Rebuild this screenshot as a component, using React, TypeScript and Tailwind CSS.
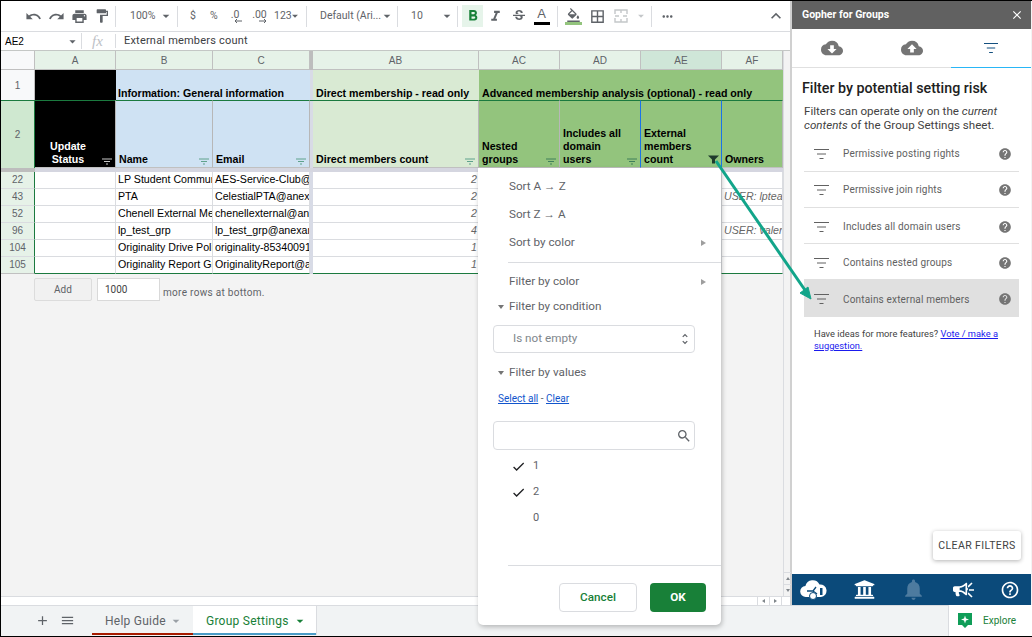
import {
  MdUndo, MdRedo, MdPrint, MdFormatPaint, MdArrowDropDown, MdFormatBold, MdFormatItalic, MdStrikethroughS,
  MdFormatColorFill, MdBorderAll, MdMoreHoriz, MdExpandLess, MdCloudDownload, MdCloudUpload,
  MdClose, MdHelp, MdHelpOutline, MdNotifications, MdCheck, MdSearch, MdAdd, MdMenu, MdUnfoldMore,
} from "react-icons/md";
import { FaUniversity, FaBullhorn } from "react-icons/fa";

const rows = [
  { n: "22", name: "LP Student Community", email: "AES-Service-Club@anexample.org", count: "2", owner: "" },
  { n: "43", name: "PTA", email: "CelestialPTA@anexample.org", count: "2", owner: "USER: lpteam@anexample.org" },
  { n: "52", name: "Chenell External Members", email: "chenellexternal@anexample.org", count: "2", owner: "" },
  { n: "96", name: "lp_test_grp", email: "lp_test_grp@anexample.org", count: "4", owner: "USER: valentine@anexample.org" },
  { n: "104", name: "Originality Drive Policy", email: "originality-853400911@anexample.org", count: "1", owner: "" },
  { n: "105", name: "Originality Report Group", email: "OriginalityReport@anexample.org", count: "1", owner: "" },
];

const risks = [
  "Permissive posting rights",
  "Permissive join rights",
  "Includes all domain users",
  "Contains nested groups",
];

function Sep({ ml }: { ml: string }) {
  return <div className={`h-[21px] w-px shrink-0 bg-[#dadce0] ${ml}`} />;
}

function Tool({ children, className = "" }: { children: React.ReactNode; className?: string }) {
  return <div className={`flex h-[22px] shrink-0 items-center justify-center text-[#5f6368] ${className}`}>{children}</div>;
}

function Toolbar() {
  return (
    <div className="flex h-[31px] items-center border-b border-[#dadce0] bg-white pl-[21px] font-['Roboto',sans-serif] text-[10.5px] text-[#5f6368]">
      <Tool className="w-[23px]"><MdUndo size={17} /></Tool>
      <Tool className="w-[23px]"><MdRedo size={17} /></Tool>
      <Tool className="w-[23px]"><MdPrint size={17} /></Tool>
      <Tool className="w-[22px]"><MdFormatPaint size={16} /></Tool>
      <Sep ml="ml-[2px]" />
      <span className="ml-[14px] w-[30px]">100%</span>
      <MdArrowDropDown size={16} className="-ml-[2px]" />
      <Sep ml="ml-[3px]" />
      <span className="ml-[12px] w-[20px]">$</span>
      <span className="w-[14px]">%</span>
      <Tool className="w-[22px] flex-col leading-[9px]">
        <span>.0</span>
        <svg width="8" height="4" viewBox="0 0 8 4" className="ml-[5px]"><path d="M8 2H2M3 0 1 2l2 2" stroke="#5f6368" fill="none" /></svg>
      </Tool>
      <Tool className="ml-[3px] w-[21px] flex-col leading-[9px]">
        <span>.00</span>
        <svg width="8" height="4" viewBox="0 0 8 4" className="ml-[6px]"><path d="M0 2h6M5 0l2 2-2 2" stroke="#5f6368" fill="none" /></svg>
      </Tool>
      <span className="ml-[4px] w-[17px]">123</span>
      <MdArrowDropDown size={14} className="-ml-[3px]" />
      <Sep ml="ml-[4px]" />
      <span className="ml-[13px] w-[58px] whitespace-nowrap">Default (Ari...</span>
      <MdArrowDropDown size={16} className="ml-[1px]" />
      <Sep ml="ml-[2px]" />
      <span className="ml-[13px] w-[28px]">10</span>
      <MdArrowDropDown size={16} />
      <Sep ml="ml-[2px]" />
      <Tool className="ml-[4px] h-[21px] w-[21px] bg-[#e6f4ea] !text-[#188038]"><MdFormatBold size={18} /></Tool>
      <Tool className="ml-[1px] w-[23px]"><MdFormatItalic size={17} /></Tool>
      <Tool className="w-[23px]"><MdStrikethroughS size={16} /></Tool>
      <Tool className="w-[23px] flex-col">
        <span className="font-['Liberation_Sans',sans-serif] text-[13px] leading-[13px]">A</span>
        <span className="mt-[2px] h-[3px] w-[16px] bg-black" />
      </Tool>
      <Sep ml="ml-[4px]" />
      <Tool className="ml-[6px] w-[18px] flex-col">
        <MdFormatColorFill size={15} />
        <span className="-mt-[1px] h-[3px] w-[17px] bg-[#93c47d]" />
      </Tool>
      <Tool className="ml-[6px] w-[18px]"><MdBorderAll size={17} /></Tool>
      <Tool className="ml-[6px] w-[18px]">
        <svg width="14" height="14" viewBox="0 0 14 14" fill="none" stroke="#c4c7c9" strokeWidth="1.4">
          <path d="M1 5V1h12v4M1 9v4h12V9M1 7h4M9 7h4M7 1v3M7 10v3" />
        </svg>
      </Tool>
      <MdArrowDropDown size={14} color="#c4c7c9" className="ml-[4px]" />
      <Sep ml="ml-[3px]" />
      <Tool className="ml-[6px] w-[18px]"><MdMoreHoriz size={15} /></Tool>
      <Tool className="ml-[90px] w-[20px]"><MdExpandLess size={20} /></Tool>
    </div>
  );
}

function FormulaBar() {
  return (
    <div className="flex h-[19px] items-center border-b border-[#c4c7c5] bg-white font-['Roboto',sans-serif] text-[11px] text-[#3c4043]">
      <span className="ml-[4px] w-[60px] font-['Liberation_Sans',sans-serif] text-[10px] text-black">AE2</span>
      <MdArrowDropDown size={15} className="text-[#5f6368]" />
      <div className="ml-[1px] h-[16px] w-px bg-[#dadce0]" />
      <span className="ml-[10px] w-[23px] font-['Liberation_Serif',serif] text-[15px] italic text-[#bdc1c6]">fx</span>
      <div className="h-[14px] w-px bg-[#dadce0]" />
      <span className="ml-[8px] tracking-[0.2px]">External members count</span>
    </div>
  );
}

function FilterLines({ width, color }: { width: number; color: string }) {
  return (
    <svg width={width} height="10" viewBox="0 0 15 10" preserveAspectRatio="none" fill="none" stroke={color} strokeWidth="1" className="shrink-0">
      <path d="M0 .5h15M3 5h9M5.500 9.500h4" />
    </svg>
  );
}

function FilterMark({ color }: { color: string }) {
  return (
    <svg width="10" height="7" viewBox="0 0 10 7" className="mb-[1px] ml-auto shrink-0" fill="none" stroke={color} strokeWidth="1">
      <path d="M0 1h10M2 3.500h6M4 6h2" />
    </svg>
  );
}

function ColHead({ label, active }: { label: string; active?: boolean }) {
  return (
    <div className={`flex items-center justify-center border-r border-b border-[#c0c0c0] text-[10px] text-[#5f6368] ${active ? "bg-[#cfe6d8]" : "bg-[#e6f2e8]"}`}>
      {label}
    </div>
  );
}

function HeadCell({ label, bg, mark, blue, center }: { label: string; bg: string; mark: string; blue?: boolean; center?: boolean }) {
  return (
    <div className={`flex items-end border-t-[1px] border-t-[#1b7a3f] border-b border-b-[#c0c0c0] pb-[1px] pl-[3px] pr-[3px] ${bg} ${blue ? "border-r border-r-[#1a73e8]" : "border-r border-r-[#b7b7b7]"}`}>
      <span className={`whitespace-pre-line font-bold leading-[13px] ${center ? "flex-1 pr-[4px] text-center text-white" : ""}`}>{label}</span>
      <FilterMark color={mark} />
    </div>
  );
}

function Cell({ children, className = "" }: { children?: React.ReactNode; className?: string }) {
  return <div className={`flex items-center overflow-hidden whitespace-nowrap border-r border-b border-[#dadce0] bg-white pb-[1px] pl-[2px] pr-[1px] ${className}`}>{children}</div>;
}

function Grid() {
  return (
    <div className="grid grid-cols-[34px_81px_97px_97px_3px_166px_81px_81px_81px_61px] grid-rows-[19px_30px_68px_4px_repeat(6,17px)] font-['Liberation_Sans',sans-serif] text-[10.65px] text-black">
      <div className="border-r border-b border-[#c0c0c0] bg-[#f8f9fa]" />
      <ColHead label="A" />
      <ColHead label="B" />
      <ColHead label="C" />
      <div className="bg-[#bdbdbd]" />
      <ColHead label="AB" />
      <ColHead label="AC" />
      <ColHead label="AD" />
      <ColHead label="AE" active />
      <ColHead label="AF" />

      <div className="flex items-center justify-center border-r border-[#c0c0c0] bg-[#f8f9fa] text-[10px] text-[#5f6368]">1</div>
      <div className="bg-black" />
      <div className="col-span-2 flex items-end bg-[#cfe2f3] pl-[2px] font-bold leading-[14px]">Information: General information</div>
      <div className="bg-[#d8dbe6]" />
      <div className="flex items-end bg-[#d9ead3] pl-[3px] font-bold leading-[14px]">Direct membership - read only</div>
      <div className="col-span-4 flex items-end bg-[#93c47d] pl-[3px] font-bold leading-[14px]">Advanced membership analysis (optional) - read only</div>

      <div className="flex items-center justify-center border-r border-t border-[#c0c0c0] border-r-[#1b7a3f] border-t-[#1b7a3f] bg-[#cfe8d0] text-[10px] text-[#5f6368]">2</div>
      <HeadCell label={"Update\nStatus"} bg="bg-black" mark="#c8c8c8" center />
      <HeadCell label="Name" bg="bg-[#cfe2f3]" mark="#5fa28c" />
      <HeadCell label="Email" bg="bg-[#cfe2f3]" mark="#5fa28c" />
      <div className="border-t border-t-[#1b7a3f] bg-[#d8dbe6]" />
      <HeadCell label="Direct members count" bg="bg-[#d9ead3]" mark="#5fa28c" />
      <HeadCell label={"Nested\ngroups"} bg="bg-[#93c47d]" mark="#3f7f5a" />
      <HeadCell label={"Includes all\ndomain\nusers"} bg="bg-[#93c47d]" mark="#3f7f5a" blue />
      <HeadCell label={"External\nmembers\ncount"} bg="bg-[#93c47d]" mark="#93c47d" blue />
      <HeadCell label="Owners" bg="bg-[#93c47d]" mark="#93c47d" />

      <div className="bg-[#bdbdbd]" />
      <div className="col-span-3 bg-[#d5d6e0]" />
      <div className="bg-[#d5d6e0]" />
      <div className="col-span-5 bg-[#d5d6e0]" />

      {rows.map((r, i) => {
        const last = i === rows.length - 1 ? "border-b-[#1b7a3f]" : "";
        return (
          <div key={r.n} className="contents">
            <div className={`flex items-center justify-center border-r border-b border-[#dadce0] border-r-[#1b7a3f] bg-[#e6f2e8] pb-[1px] text-[10px] text-[#5f6368] ${i === rows.length - 1 ? "border-b-[#c0c0c0]" : ""}`}>{r.n}</div>
            <Cell className={last} />
            <Cell className={last}>{r.name}</Cell>
            <Cell className={last}>{r.email}</Cell>
            <div className="bg-[#d8dbe6]" />
            <Cell className={`justify-end italic text-[#666666] ${last}`}>{r.count}</Cell>
            <Cell className={last} />
            <Cell className={last} />
            <Cell className={last} />
            <Cell className={`italic text-[#666666] ${last}`}>{r.owner}</Cell>
          </div>
        );
      })}
    </div>
  );
}

function AddRows() {
  return (
    <div className="ml-[33px] mt-[4px] flex items-center font-['Roboto',sans-serif] text-[10px] text-[#5f6368]">
      <div className="flex h-[23px] w-[58px] items-center justify-center rounded-[2px] border border-[#dcdcdc] bg-[#f1f1f1]">Add</div>
      <div className="ml-[5px] flex h-[23px] w-[63px] items-center border border-[#d9d9d9] bg-white pl-[7px] text-[#444444]">1000</div>
      <span className="ml-[3px] mt-[5px] tracking-[0.3px]">more rows at bottom.</span>
    </div>
  );
}

function MenuRow({ children, arrow, className = "" }: { children: React.ReactNode; arrow?: boolean; className?: string }) {
  return (
    <div className={`flex items-center pl-[31px] pr-[15px] ${className}`}>
      <span>{children}</span>
      {arrow && <span className="ml-auto h-0 w-0 border-y-[3px] border-l-[5px] border-y-transparent border-l-[#9e9e9e]" />}
    </div>
  );
}

function CollapseRow({ label, className = "" }: { label: string; className?: string }) {
  return (
    <div className={`flex items-center pl-[20px] ${className}`}>
      <span className="mr-[5px] h-0 w-0 border-x-[3px] border-t-[4px] border-x-transparent border-t-[#757575]" />
      {label}
    </div>
  );
}

function FilterMenu() {
  return (
    <div className="absolute left-[477px] top-[167px] z-10 flex h-[457px] w-[243px] flex-col rounded-b-[5px] bg-white font-['Roboto',sans-serif] text-[11.7px] text-[#5f6368] shadow-[1px_2px_5px_rgba(0,0,0,0.25)]">
      <MenuRow className="mt-[10px] h-[18px]">Sort A → Z</MenuRow>
      <MenuRow className="mt-[10px] h-[18px]">Sort Z → A</MenuRow>
      <MenuRow arrow className="mt-[10px] h-[18px]">Sort by color</MenuRow>
      <div className="ml-[30px] mt-[10px] h-px bg-[#dadce0]" />
      <MenuRow arrow className="mt-[10px] h-[18px]">Filter by color</MenuRow>
      <CollapseRow label="Filter by condition" className="mt-[7px] h-[18px]" />
      <div className="ml-[15px] mt-[9px] flex h-[28px] w-[202px] items-center rounded-[4px] border border-[#dadce0] pb-px pl-[19px] pr-[2px] text-[#80868b]">
        Is not empty
        <MdUnfoldMore size={14} className="ml-auto text-[#5f6368]" />
      </div>
      <CollapseRow label="Filter by values" className="mt-[11px] h-[18px]" />
      <div className="ml-[20px] mt-[10px] h-[14px] text-[10px] leading-[14px]">
        <span className="text-[#1155cc] underline">Select all</span> - <span className="text-[#1155cc] underline">Clear</span>
      </div>
      <div className="ml-[15px] mt-[15px] flex h-[29px] w-[202px] items-center justify-end rounded-[4px] border border-[#dadce0] pr-[2px]">
        <MdSearch size={16} className="text-[#5f6368]" />
      </div>
      <div className="ml-[33px] mt-[3px] flex flex-col">
        {["1", "2", "0"].map((v) => (
          <div key={v} className="flex h-[26px] items-center text-[11px]">
            <span className="w-[22px] text-[#202124]">{v !== "0" && <MdCheck size={15} />}</span>
            {v}
          </div>
        ))}
      </div>
      <div className="ml-[30px] mt-[34px] h-px bg-[#dadce0]" />
      <div className="mt-[17px] flex items-center justify-end gap-[13px] pr-[15px] font-medium">
        <div className="flex h-[29px] w-[78px] items-center justify-center rounded-[4px] border border-[#dadce0] text-[#188038]">Cancel</div>
        <div className="flex h-[29px] w-[56px] items-center justify-center rounded-[4px] bg-[#188038] font-bold text-white">OK</div>
      </div>
    </div>
  );
}

function TabBar() {
  return (
    <div className="flex h-[30px] items-stretch border-t border-[#dadce0] bg-[#f1f3f4] font-['Roboto',sans-serif] text-[12px] tracking-[0.25px] text-[#5f6368]">
      <div className="ml-[34px] flex w-[57px] items-center text-[#5f6368]">
        <MdAdd size={15} />
        <MdMenu size={15} className="ml-[10px]" />
      </div>
      <div className="flex w-[101px] items-center border-b-2 border-[#a61c00] pl-[13px] pt-[2px]">
        Help Guide
        <MdArrowDropDown size={16} className="ml-[2px] text-[#9aa0a6]" />
      </div>
      <div className="flex w-[123px] items-center border-b-2 border-[#4a9cc7] bg-white pl-[13px] pt-[2px] text-[#188038]">
        Group Settings
        <MdArrowDropDown size={16} className="ml-[3px]" />
      </div>
      <div className="flex-1 border-l border-[#dadce0]" />
    </div>
  );
}

function RiskRow({ label, selected, low }: { label: string; selected?: boolean; low?: boolean }) {
  return (
    <div className={`flex items-center border-b pl-[10px] pr-[7px] ${selected ? "h-[37px] border-transparent bg-[#e0e0e0]" : "h-[36px] border-[#e0e0e0]"} ${low ? "pt-[2px]" : ""}`}>
      <FilterLines width={15} color="#616161" />
      <span className="ml-[14px]">{label}</span>
      <MdHelp size={14} className="ml-auto text-[#757575]" />
    </div>
  );
}

function Sidebar() {
  return (
    <div className="flex h-[604px] w-[240px] shrink-0 flex-col border-l border-[#d0d0d0] bg-white font-['Roboto',sans-serif]">
      <div className="flex h-[28px] items-center bg-[#616161] pl-[10px] pr-[7px] text-[10.5px] font-bold text-white">
        Gopher for Groups
        <MdClose size={14} className="ml-auto" />
      </div>
      <div className="flex h-[39px] border-b border-[#e0e0e0] text-[#757575]">
        <div className="flex flex-1 items-center justify-center"><MdCloudDownload size={22} /></div>
        <div className="flex flex-1 items-center justify-center"><MdCloudUpload size={22} /></div>
        <div className="-mb-px flex flex-1 items-center justify-center border-b-[1px] border-[#29b6f6]"><FilterLines width={14} color="#0b4a7a" /></div>
      </div>
      <h1 className="ml-[10px] mt-[10px] text-[14.25px] font-medium leading-[20px] text-[#212121]">Filter by potential setting risk</h1>
      <p className="ml-[12px] mt-[6px] w-[215px] text-[11.6px] leading-[14px] text-[#424242]">
        Filters can operate only on the <i>current contents</i> of the Group Settings sheet.
      </p>
      <div className="mx-[12px] mt-[4px] flex flex-col text-[10px] tracking-[0.17px] text-[#616161]">
        {risks.map((label, i) => (
          <RiskRow key={label} label={label} low={i >= 2} />
        ))}
        <RiskRow label="Contains external members" selected low />
      </div>
      <p className="ml-[22px] mt-[11px] w-[200px] text-[9.3px] leading-[12px] text-[#424242]">
        Have ideas for more features? <span className="text-[#1a1aee] underline">Vote / make a suggestion.</span>
      </p>
      <div className="mt-auto flex justify-end pb-[14px] pr-[10px]">
        <div className="flex h-[29px] w-[88px] items-center justify-center rounded-[3px] bg-white text-[10.5px] tracking-[0.4px] text-[#424242] shadow-[0_1px_4px_rgba(0,0,0,0.3)]">
          CLEAR FILTERS
        </div>
      </div>
      <div className="flex h-[31px] items-center justify-between bg-[#0b4a7a] pl-[8px] pr-[11px] text-white">
        <svg width="27" height="22" viewBox="0 0 27 22" fill="white">
          <path d="M6 18a5.500 5.500 0 0 1-.6-11A7.500 7.500 0 0 1 19.500 5.500 6 6 0 0 1 21 18z" />
          <path d="M7 12h6M13 12l3-4M13 12l4 3" stroke="#0b4a7a" strokeWidth="1.3" fill="none" />
          <circle cx="13" cy="17" r="3.500" fill="white" stroke="#0b4a7a" />
          <rect x="20" y="9" width="2.500" height="7" fill="#0b4a7a" />
        </svg>
        <FaUniversity size={21} />
        <MdNotifications size={25} className="text-[#4d7b9f]" />
        <div className="flex items-center">
          <FaBullhorn size={15} />
          <svg width="6" height="16" viewBox="0 0 6 16" stroke="white" strokeWidth="1.6"><path d="M0 5 4 1M1 8h5M0 11l4 4" /></svg>
        </div>
        <MdHelpOutline size={20} />
      </div>
    </div>
  );
}

function ScrollBars() {
  return (
    <div className="flex w-[8px] shrink-0 flex-col justify-end border-l border-[#dadce0]">
      <div className="flex h-[12px] items-center justify-center border-t border-[#dadce0]">
        <span className="h-0 w-0 border-x-[2px] border-b-[3px] border-x-transparent border-b-[#80868b]" />
      </div>
      <div className="flex h-[12px] items-center justify-center border-t border-[#dadce0]">
        <span className="h-0 w-0 border-x-[2px] border-t-[3px] border-x-transparent border-t-[#80868b]" />
      </div>
    </div>
  );
}

export default function App() {
  return (
    <div className="relative h-[637px] w-[1032px] overflow-hidden border-y border-l border-black bg-[#f3f3f3]">
      <div className="flex h-[604px]">
        <div className="flex w-[790px] shrink-0 flex-col border-r border-[#d0d0d0]">
          <Toolbar />
          <FormulaBar />
          <div className="flex flex-1">
            <div className="w-[782px] shrink-0">
              <Grid />
              <AddRows />
            </div>
            <ScrollBars />
          </div>
          <div className="flex h-[9px] items-stretch justify-end border-t border-[#dadce0] bg-white pr-[8px]">
            <span className="flex w-[12px] items-center justify-center border-l border-[#dadce0]">
              <span className="h-0 w-0 border-y-[2px] border-r-[3px] border-y-transparent border-r-[#80868b]" />
            </span>
            <span className="flex w-[13px] items-center justify-center border-x border-[#dadce0]">
              <span className="h-0 w-0 border-y-[2px] border-l-[3px] border-y-transparent border-l-[#80868b]" />
            </span>
          </div>
        </div>
        <Sidebar />
      </div>
      <div className="flex h-[31px]">
        <div className="w-[947px]"><TabBar /></div>
        <div className="flex flex-1 items-center border-l border-[#dadce0] bg-white pl-[8px] font-['Roboto',sans-serif] text-[10px] text-[#188038]">
          <svg width="16" height="17" viewBox="0 0 16 17">
            <path d="M1 1h14v12h-4l-3 3-3-3H1z" fill="#0f9d58" />
            <path d="M8 3.500 9 6.500 12 7.500 9 8.500 8 11.500 7 8.500 4 7.500 7 6.500z" fill="white" />
          </svg>
          <span className="ml-[10px]">Explore</span>
        </div>
      </div>
      <FilterMenu />
      <svg className="pointer-events-none absolute left-0 top-0 z-20" width="1032" height="637" fill="none">
        <path d="M707 154.500h11l-4 4v4h-3v-4z" fill="#1f3a2c" />
        <path d="M715 160 806 292" stroke="#12a58a" strokeWidth="3" />
        <path d="M810 298 799 292 807 286z" fill="#12a58a" stroke="#12a58a" strokeWidth="1" />
      </svg>
    </div>
  );
}
